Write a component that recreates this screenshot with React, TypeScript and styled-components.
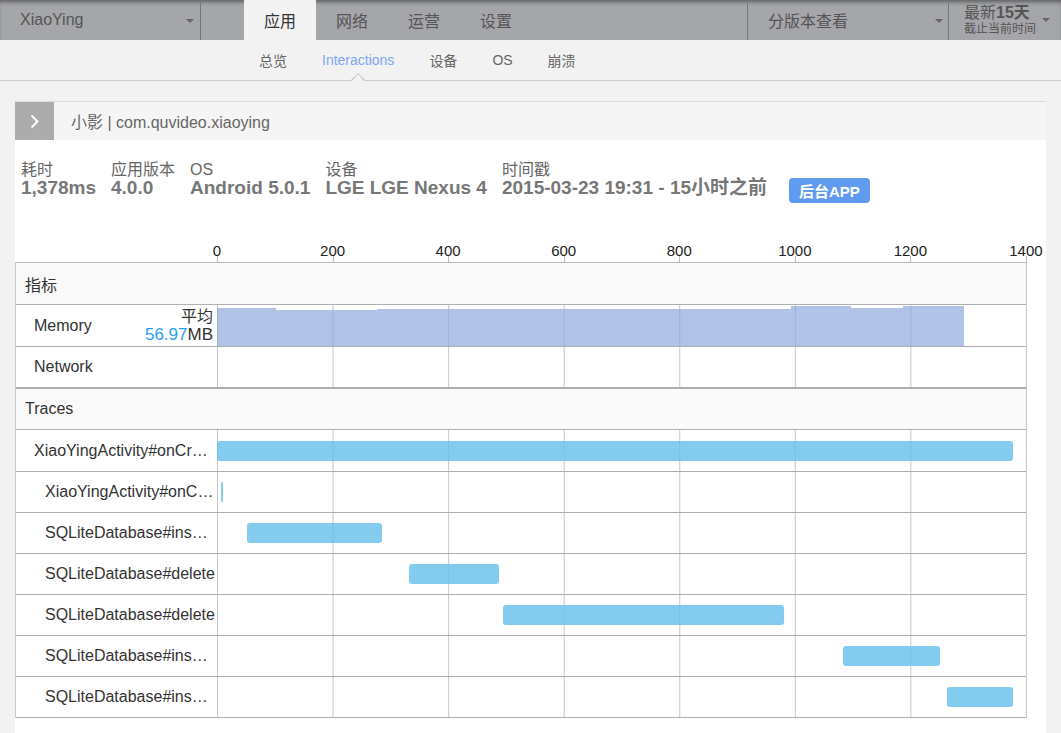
import React from "react";
import styled, { createGlobalStyle } from "styled-components";

const GlobalStyle = createGlobalStyle`
  html, body { margin: 0; padding: 0; background: #f2f2f2; }
  body {
    font-family: "Liberation Sans", "Noto Sans CJK SC", Arial, sans-serif;
    color: #333;
  }
  * { box-sizing: border-box; }
`;

/* ---------- top bar ---------- */
const TopBar = styled.header`
  display: flex;
  height: 40px;
  background: #a5a6a9;
  box-shadow: inset 0 4px 4px -2px rgba(0, 0, 0, 0.45);
  color: #555;
  font-size: 16px;
`;

const Dropdown = styled.div<{ $width: number; $padL: number; $padR: number; $side: "left" | "right" }>`
  flex: none;
  width: ${(p) => p.$width}px;
  display: flex;
  align-items: center;
  justify-content: space-between;
  padding: 0 ${(p) => p.$padR}px 0 ${(p) => p.$padL}px;
  border-${(p) => p.$side}: 1px solid #6b7891;
`;

const Caret = styled.span<{ $up?: number }>`
  flex: none;
  width: 0;
  height: 0;
  border-left: 4px solid transparent;
  border-right: 4px solid transparent;
  border-top: 4px solid #666;
  margin-top: ${(p) => (p.$up ? -p.$up : 2)}px;
`;

const Tabs = styled.nav`
  display: flex;
  margin-left: 43px;
`;

const Tab = styled.div<{ $active?: boolean }>`
  width: 72px;
  display: flex;
  align-items: center;
  justify-content: center;
  background: ${(p) => (p.$active ? "#f2f2f2" : "transparent")};
  color: ${(p) => (p.$active ? "#333" : "#555")};
`;

const Spacer = styled.div`
  flex: 1;
`;

const DateStack = styled.div`
  display: flex;
  flex-direction: column;
  color: #555;
`;

const DateMain = styled.span`
  font-size: 16px;
  line-height: 18px;
  b { font-weight: bold; }
`;

const DateSub = styled.span`
  font-size: 12px;
  line-height: 14px;
`;

/* ---------- sub nav ---------- */
const SubNav = styled.nav`
  display: flex;
  height: 41px;
  gap: 35px;
  padding-left: 259px;
  border-bottom: 1px solid #cccccc;
  font-size: 14px;
  color: #666;
`;

const SubNavItem = styled.div<{ $active?: boolean }>`
  position: relative;
  display: flex;
  align-items: center;
  color: ${(p) => (p.$active ? "#7ea6f2" : "#666")};
  ${(p) =>
    p.$active &&
    `
    &::before, &::after {
      content: "";
      position: absolute;
      left: 50%;
      transform: translateX(-50%);
      width: 0; height: 0;
      border-style: solid;
      border-color: transparent;
    }
    &::before {
      bottom: 0;
      border-width: 0 7px 7px 7px;
      border-bottom-color: #c4c4c4;
    }
    &::after {
      bottom: -1px;
      border-width: 0 6px 7px 6px;
      border-bottom-color: #f2f2f2;
    }
  `}
`;

/* ---------- card ---------- */
const Main = styled.main`
  padding: 20px 15px 0 15px;
`;

const Card = styled.section`
  background: #fff;
  padding-bottom: 20px;
`;

const CardHeader = styled.div`
  display: flex;
  height: 39px;
  border-top: 1px solid #dcdcdc;
  background: #f5f5f5;
`;

const ToggleButton = styled.div`
  width: 39px;
  flex: none;
  background: #acacac;
  display: flex;
  align-items: center;
  justify-content: center;
`;

const CardTitle = styled.div`
  display: flex;
  align-items: center;
  padding-left: 17px;
  font-size: 16px;
  color: #666;
`;

const Stats = styled.div`
  display: flex;
  align-items: flex-end;
  gap: 15px;
  padding: 21px 6px 0;
`;

const Stat = styled.div`
  display: flex;
  flex-direction: column;
`;

const StatLabel = styled.span`
  font-size: 16px;
  line-height: 17px;
  color: #666;
`;

const StatValue = styled.span`
  font-size: 19px;
  line-height: 20px;
  font-weight: bold;
  color: #777;
  white-space: nowrap;
`;

const Badge = styled.span`
  height: 25px;
  padding: 0 10px;
  margin: 0 0 -5px 7px;
  display: flex;
  align-items: center;
  background: #5f9cef;
  border-radius: 4px;
  color: #fff;
  font-size: 15px;
  font-weight: bold;
`;

/* ---------- chart ---------- */
const AxisRow = styled.div`
  display: flex;
  justify-content: space-between;
  width: 809px;
  height: 20px;
  margin: 44px 0 0 202px;
`;

const Tick = styled.div`
  position: relative;
  width: 0;
  height: 100%;
  &::after {
    content: "";
    position: absolute;
    left: 0;
    bottom: 0;
    width: 1px;
    height: 6px;
    background: #bbb;
  }
`;

const TickLabel = styled.span`
  position: absolute;
  top: 1px;
  left: 0;
  transform: translateX(-50%);
  font-size: 15px;
  line-height: 16px;
  color: #222;
  white-space: nowrap;
`;

const Table = styled.div`
  width: 1012px;
  border-top: 1px solid #b8b8b8;
  border-left: 1px solid #c8c8c8;
  border-right: 1px solid #c8c8c8;
`;

const SectionRow = styled.div<{ $h: number }>`
  height: ${(p) => p.$h}px;
  display: flex;
  align-items: center;
  padding-left: 9px;
  background: #fafafa;
  border-bottom: 1px solid #b0b0b0;
  font-size: 16px;
  color: #333;
`;

const Row = styled.div<{ $h: number; $border?: number }>`
  height: ${(p) => p.$h}px;
  display: flex;
  border-bottom: ${(p) => p.$border ?? 1}px solid #adadad;
`;

const LabelCell = styled.div<{ $indent: number }>`
  width: 201px;
  flex: none;
  padding: 0 1px 0 ${(p) => p.$indent}px;
  font-size: 16px;
  color: #333;
  white-space: nowrap;
  overflow: hidden;
  display: flex;
  align-items: center;
`;

const LabelText = styled.span`
  overflow: hidden;
  text-overflow: ellipsis;
  white-space: nowrap;
`;

const MetricLabel = styled(LabelCell)`
  justify-content: space-between;
  padding-right: 4px;
`;

const Avg = styled.div`
  display: flex;
  flex-direction: column;
  align-items: flex-end;
  line-height: 18px;
`;

const AvgTitle = styled.span`
  font-size: 16px;
`;

const AvgValue = styled.span`
  font-size: 17px;
  em { font-style: normal; color: #2a9df4; }
`;

const PlotCell = styled.div`
  flex: 1;
  position: relative;
  background-image: linear-gradient(to right, #c8c8c8 1px, transparent 1px);
  background-size: calc(100% / 7) 100%;
  background-repeat: repeat-x;
`;

const MemorySvg = styled.svg`
  display: block;
  width: 100%;
  height: 100%;
`;

const TraceBar = styled.div`
  position: absolute;
  top: calc(50% - 10px);
  height: 20px;
  border-radius: 3px;
  background: rgba(100, 190, 235, 0.8);
`;

const TOTAL = 1400;
const ticks = [0, 200, 400, 600, 800, 1000, 1200, 1400];

const traces = [
  { name: "XiaoYingActivity#onCreate", indent: 18, start: 0, dur: 1377 },
  { name: "XiaoYingActivity#onCreate", indent: 29, start: 7, dur: 3.5 },
  { name: "SQLiteDatabase#insertWithOnConflict", indent: 29, start: 52, dur: 234 },
  { name: "SQLiteDatabase#delete", indent: 29, start: 332, dur: 156 },
  { name: "SQLiteDatabase#delete", indent: 29, start: 495, dur: 486 },
  { name: "SQLiteDatabase#insertWithOnConflict", indent: 29, start: 1083, dur: 168 },
  { name: "SQLiteDatabase#insertWithOnConflict", indent: 29, start: 1263, dur: 114 },
];

const stats = [
  { label: "耗时", value: "1,378ms" },
  { label: "应用版本", value: "4.0.0" },
  { label: "OS", value: "Android 5.0.1" },
  { label: "设备", value: "LGE LGE Nexus 4" },
  { label: "时间戳", value: "2015-03-23 19:31 - 15小时之前" },
];

export default function App() {
  return (
    <>
      <GlobalStyle />
      <TopBar>
        <Dropdown $width={201} $padL={20} $padR={6} $side="right">
          <span>XiaoYing</span>
          <Caret />
        </Dropdown>
        <Tabs>
          <Tab $active>应用</Tab>
          <Tab>网络</Tab>
          <Tab>运营</Tab>
          <Tab>设置</Tab>
        </Tabs>
        <Spacer />
        <Dropdown $width={201} $padL={20} $padR={5} $side="left">
          <span>分版本查看</span>
          <Caret />
        </Dropdown>
        <Dropdown $width={113} $padL={15} $padR={11} $side="left">
          <DateStack>
            <DateMain>
              最新<b>15天</b>
            </DateMain>
            <DateSub>截止当前时间</DateSub>
          </DateStack>
          <Caret $up={1} />
        </Dropdown>
      </TopBar>

      <SubNav>
        <SubNavItem>总览</SubNavItem>
        <SubNavItem $active>Interactions</SubNavItem>
        <SubNavItem>设备</SubNavItem>
        <SubNavItem>OS</SubNavItem>
        <SubNavItem>崩溃</SubNavItem>
      </SubNav>

      <Main>
        <Card>
          <CardHeader>
            <ToggleButton>
              <svg width="9" height="15" viewBox="0 0 9 15">
                <polyline points="1.5,1.5 7.5,7.5 1.5,13.5" fill="none" stroke="#fff" strokeWidth="2" />
              </svg>
            </ToggleButton>
            <CardTitle>小影 | com.quvideo.xiaoying</CardTitle>
          </CardHeader>

          <Stats>
            {stats.map((s) => (
              <Stat key={s.label}>
                <StatLabel>{s.label}</StatLabel>
                <StatValue>{s.value}</StatValue>
              </Stat>
            ))}
            <Badge>后台APP</Badge>
          </Stats>

          <AxisRow>
            {ticks.map((t) => (
              <Tick key={t}>
                <TickLabel>{t}</TickLabel>
              </Tick>
            ))}
          </AxisRow>

          <Table>
            <SectionRow $h={42}>指标</SectionRow>
            <Row $h={42}>
              <MetricLabel $indent={18}>
                <span>Memory</span>
                <Avg>
                  <AvgTitle>平均</AvgTitle>
                  <AvgValue>
                    <em>56.97</em>MB
                  </AvgValue>
                </Avg>
              </MetricLabel>
              <PlotCell>
                <MemorySvg viewBox="0 0 809 41" preserveAspectRatio="none">
                  <path
                    d="M0,41 V3 H59 V5 H160 V4 H574 V1 H634 V3 H686 V1 H747 V41 Z"
                    fill="rgba(140,165,220,0.68)"
                  />
                </MemorySvg>
              </PlotCell>
            </Row>
            <Row $h={42} $border={2}>
              <LabelCell $indent={18}>
                <LabelText>Network</LabelText>
              </LabelCell>
              <PlotCell />
            </Row>
            <SectionRow $h={41}>Traces</SectionRow>
            {traces.map((t, i) => (
              <Row key={i} $h={i === 0 ? 42 : 41}>
                <LabelCell $indent={t.indent}>
                  <LabelText>{t.name}</LabelText>
                </LabelCell>
                <PlotCell>
                  <TraceBar
                    style={{
                      left: `${(t.start / TOTAL) * 100}%`,
                      width: `${(t.dur / TOTAL) * 100}%`,
                      borderRadius: t.dur < 10 ? 1 : undefined,
                    }}
                  />
                </PlotCell>
              </Row>
            ))}
          </Table>
        </Card>
      </Main>
    </>
  );
}
